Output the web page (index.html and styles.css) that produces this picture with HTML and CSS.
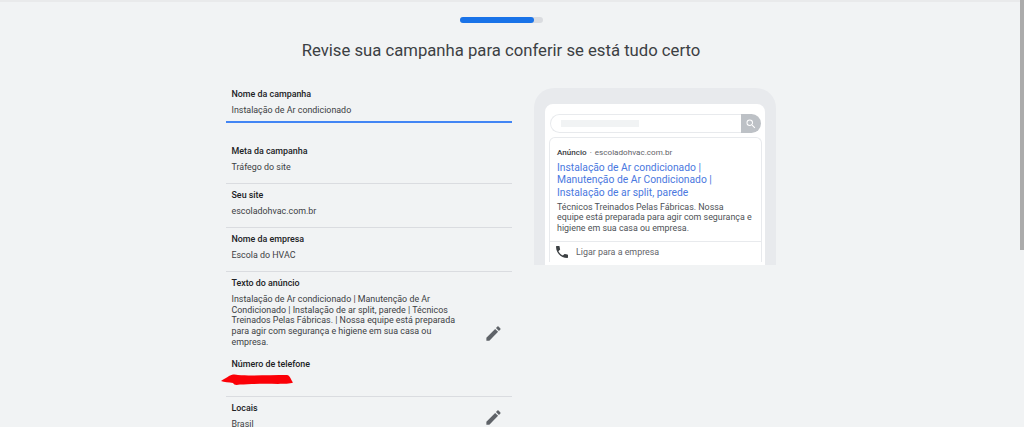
FILE: index.html
```html
<!DOCTYPE html>
<html lang="pt-BR">
<head>
	<meta charset="UTF-8">
	<title>Revise sua campanha</title>
	<link rel="stylesheet" href="styles.css">
</head>
<body>
<div class="scrollbar"><div class="scrollbar-thumb"></div></div>
<div class="page">
	<div class="progress"><div class="progress-fill"></div></div>
	<h1 class="title">Revise sua campanha para conferir se está tudo certo</h1>
	<div class="columns">
		<div class="summary">
			<div class="field field-name">
				<div class="label">Nome da campanha</div>
				<div class="value">Instalação de Ar condicionado</div>
			</div>
			<div class="field field-goal">
				<div class="label">Meta da campanha</div>
				<div class="value">Tráfego do site</div>
			</div>
			<div class="field">
				<div class="label">Seu site</div>
				<div class="value">escoladohvac.com.br</div>
			</div>
			<div class="field">
				<div class="label">Nome da empresa</div>
				<div class="value">Escola do HVAC</div>
			</div>
			<div class="field field-edit">
				<div class="field-text">
					<div class="label">Texto do anúncio</div>
					<div class="value value-long">Instalação de Ar condicionado | Manutenção de Ar Condicionado | Instalação de ar split, parede | Técnicos Treinados Pelas Fábricas. | Nossa equipe está preparada para agir com segurança e higiene em sua casa ou empresa.</div>
					<div class="label label-phone">Número de telefone</div>
					<svg class="scribble" width="74" height="13" viewBox="0 0 74 13"><path d="M1 8 C3 6 7 5 9 3 C11 1.500 15 1 18 2 C30 3 50 2 67 2 C70 2.500 70 5 73 9.500 C70 11 64 10.500 58 11 C44 10.500 30 11 20 11.500 C16 12.500 14 12 13 10 C9 9 4 9.500 1 8 Z" fill="#fb0007"/></svg>
				</div>
				<svg class="pencil" width="19" height="19" viewBox="0 0 24 24"><path d="M3 17.250V21h3.750L17.810 9.940l-3.750-3.750L3 17.250zM20.710 7.040a1 1 0 0 0 0-1.410l-2.340-2.340a1 1 0 0 0-1.410 0l-1.830 1.830 3.750 3.750 1.830-1.830z" fill="#5f6368"/></svg>
			</div>
			<div class="field field-edit field-last">
				<div class="field-text">
					<div class="label">Locais</div>
					<div class="value">Brasil</div>
				</div>
				<svg class="pencil" width="19" height="19" viewBox="0 0 24 24"><path d="M3 17.250V21h3.750L17.810 9.940l-3.750-3.750L3 17.250zM20.710 7.040a1 1 0 0 0 0-1.410l-2.340-2.340a1 1 0 0 0-1.410 0l-1.830 1.830 3.750 3.750 1.830-1.830z" fill="#5f6368"/></svg>
			</div>
		</div>
		<div class="phone">
			<div class="screen">
				<div class="search">
					<div class="search-input"><div class="search-ghost"></div></div>
					<div class="search-btn">
						<svg width="12" height="12" viewBox="0 0 24 24"><path d="M15.500 14h-.790l-.280-.270A6.470 6.470 0 0 0 16 9.500 6.500 6.500 0 1 0 9.500 16c1.610 0 3.090-.590 4.230-1.570l.270.280v.790l5 4.990L20.490 19l-4.990-5zm-6 0C7.010 14 5 11.990 5 9.500S7.010 5 9.500 5 14 7.010 14 9.500 11.990 14 9.500 14z" fill="#fff"/></svg>
					</div>
				</div>
				<div class="ad">
					<div class="ad-top">
						<div class="ad-url"><b>Anúncio</b><span class="ad-dot">·</span>escoladohvac.com.br</div>
						<div class="ad-title">Instalação de Ar condicionado | Manutenção de Ar Condicionado | Instalação de ar split, parede</div>
						<div class="ad-desc">Técnicos Treinados Pelas Fábricas. Nossa<br>equipe está preparada para agir com segurança e higiene em sua casa ou empresa.</div>
					</div>
					<div class="ad-call">
						<svg width="16" height="16" viewBox="0 0 24 24"><path d="M6.600 10.800c1.400 2.800 3.800 5.100 6.600 6.600l2.200-2.200c.3-.3.7-.4 1-.2 1.100.4 2.300.6 3.600.6.600 0 1 .4 1 1V20c0 .6-.4 1-1 1C10.600 21 3 13.400 3 4c0-.6.4-1 1-1h3.500c.6 0 1 .4 1 1 0 1.300.2 2.500.6 3.600.1.300 0 .7-.2 1l-2.300 2.200z" fill="#3c4043"/></svg>
						<span>Ligar para a empresa</span>
					</div>
				</div>
			</div>
		</div>
	</div>
</div>
</body>
</html>
```

FILE: styles.css
```css
* {
	margin: 0; padding: 0; box-sizing: border-box;
}
html, body {
	height: 427px;
	overflow: hidden;
}
body {
	background: #f1f3f4;
	font-family: Roboto, "Liberation Sans", sans-serif;
	color: #3c4043;
	border-top: 2px solid #e9eaeb;
}
.scrollbar {
	position: absolute; top: 0; right: 0;
	width: 4px; height: 427px;
}
.scrollbar-thumb {
	height: 250px;
	background: #ababab;
}

.page {
	width: 1024px;
	height: 425px;
	overflow: hidden;
}
.progress {
	width: 83px; height: 6px;
	margin: 15px 0 0 460px;
	background: #dadce0;
	border-radius: 3px;
}
.progress-fill {
	width: 74px; height: 6px;
	background: #1a73e8;
	border-radius: 3px;
}
.title {
	margin-top: 15px;
	padding-right: 22px;
	text-align: center;
	font-size: 16.7px;
	font-weight: 400;
	line-height: 26px;
	color: #3c4043;
}

.columns {
	display: flex;
	align-items: flex-start;
	gap: 22px;
	margin: 22px 0 0 226px;
}
.summary {
	width: 286px;
}
.field {
	padding: 3px 6px 8px 5.5px;
	border-bottom: 1px solid #dadce0;
}
.field-name {
	padding: 0 6px 3px 5.5px;
	border-bottom: 2px solid #4285f4;
}
.field-goal {
	padding-top: 20px;
}
.field-edit {
	display: flex;
	align-items: center;
	justify-content: space-between;
}
.field-last {
	border-bottom: 0;
}
.field-text {
	width: 232px;
}
.label {
	font-size: 8.9px;
	font-weight: 500;
	line-height: 16px;
	color: #202124;
}
.value {
	font-size: 8.9px;
	line-height: 16px;
	color: #3c4043;
}
.value-long {
	line-height: 10.7px;
	margin-top: 3px;
}
.label-phone {
	margin-top: 8px;
}
.scribble {
	display: block;
	margin: 1px 0 2px -12px;
	height: 13px;
}
.pencil {
	margin: 4px 3px 0 0;
	flex: none;
}

.phone {
	width: 242px;
	height: 177px;
	margin-top: 2px;
	background: #e8eaed;
	border-radius: 20px 20px 0 0;
	padding: 16px 11px 0;
	overflow: hidden;
}
.screen {
	height: 161px;
	background: #fff;
	border-radius: 8px 8px 0 0;
	padding: 10px 3px 0 4px;
}
.search {
	display: flex;
	height: 19px;
	margin: 0 1px;
}
.search-input {
	flex: 1;
	border: 1px solid #e8eaed;
	border-right: 0;
	border-radius: 10px 0 0 10px;
	padding: 5px 10px;
}
.search-ghost {
	width: 78px; height: 7px;
	background: #f1f3f4;
}
.search-btn {
	width: 20px;
	background: #bdc1c6;
	border-radius: 0 10px 10px 0;
	display: flex;
	align-items: center;
	justify-content: center;
}
.ad {
	margin-top: 4px;
	border: 1px solid #e8eaed;
	border-bottom: 0;
	border-radius: 6px 6px 0 0;
}
.ad-top {
	padding: 8px 7px 7px;
	border-bottom: 1px solid #e8eaed;
}
.ad-url {
	font-size: 8.1px;
	line-height: 12px;
	color: #5f6368;
}
.ad-url b {
	font-weight: 500;
	color: #3c4043;
}
.ad-dot {
	margin: 0 3px;
}
.ad-title {
	margin-top: 4px;
	font-size: 10.3px;
	line-height: 12.3px;
	color: #4a78e0;
}
.ad-desc {
	margin-top: 3px;
	font-size: 8.9px;
	line-height: 10.6px;
	color: #4d5156;
}
.ad-call {
	display: flex;
	align-items: center;
	gap: 6px;
	height: 20px;
	padding: 0 4px;
	font-size: 8.9px;
	color: #5f6368;
}
```
